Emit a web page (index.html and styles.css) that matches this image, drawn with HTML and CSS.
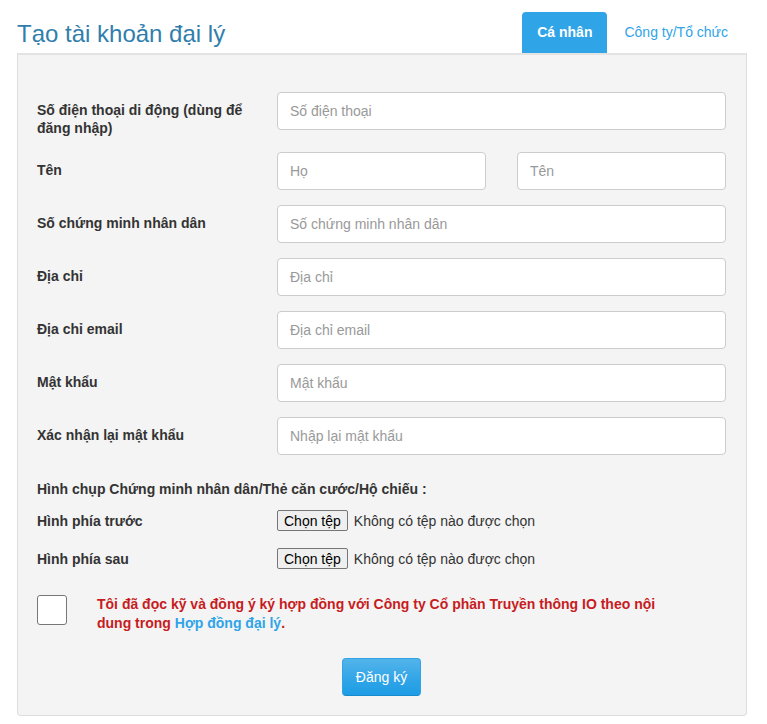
FILE: index.html
```html
<!DOCTYPE html>
<html lang="vi">
<head>
    <meta charset="UTF-8">
    <meta name="viewport" content="width=device-width, initial-scale=1.0">
    <title>Tạo tài khoản đại lý</title>
    <link rel="stylesheet" href="styles.css">
</head>
<body>

<div class="wrapper">
    <div class="header">
        <h1>Tạo tài khoản đại lý</h1>
        <ul class="tabs">
            <li class="tab active"><a href="#">Cá nhân</a></li>
            <li class="tab"><a href="#">Công ty/Tổ chức</a></li>
        </ul>
    </div>

    <div class="panel">
        <form action="#" method="post">

            <!-- Số điện thoại -->
            <div class="form-group">
                <label class="control-label" for="phone">Số điện thoại di động (dùng để đăng nhập)</label>
                <input type="text" id="phone" class="form-control" placeholder="Số điện thoại">
            </div>

            <!-- Họ tên -->
            <div class="form-group">
                <label class="control-label" for="ho">Tên</label>
                <div class="two-cols">
                    <input type="text" id="ho" class="form-control" placeholder="Họ">
                    <input type="text" id="ten" class="form-control" placeholder="Tên">
                </div>
            </div>

            <div class="form-group">
                <label class="control-label" for="cmnd">Số chứng minh nhân dân</label>
                <input type="text" id="cmnd" class="form-control" placeholder="Số chứng minh nhân dân">
            </div>

            <div class="form-group">
                <label class="control-label" for="diachi">Địa chỉ</label>
                <input type="text" id="diachi" class="form-control" placeholder="Địa chỉ">
            </div>

            <div class="form-group">
                <label class="control-label" for="email">Địa chỉ email</label>
                <input type="email" id="email" class="form-control" placeholder="Địa chỉ email">
            </div>

            <div class="form-group">
                <label class="control-label" for="matkhau">Mật khẩu</label>
                <input type="password" id="matkhau" class="form-control" placeholder="Mật khẩu">
            </div>

            <div class="form-group">
                <label class="control-label" for="matkhau2">Xác nhận lại mật khẩu</label>
                <input type="password" id="matkhau2" class="form-control" placeholder="Nhập lại mật khẩu">
            </div>

            <!-- Hình chụp giấy tờ -->
            <p class="section-title">Hình chụp Chứng minh nhân dân/Thẻ căn cước/Hộ chiếu :</p>

            <div class="file-row">
                <span class="file-label">Hình phía trước</span>
                <div class="file-input">
                    <button type="button" class="file-btn">Chọn tệp</button>
                    <span class="file-name">Không có tệp nào được chọn</span>
                </div>
            </div>

            <div class="file-row">
                <span class="file-label">Hình phía sau</span>
                <div class="file-input">
                    <button type="button" class="file-btn">Chọn tệp</button>
                    <span class="file-name">Không có tệp nào được chọn</span>
                </div>
            </div>

            <!-- Điều khoản -->
            <div class="agree">
                <input type="checkbox" id="dongy" class="agree-box">
                <label for="dongy" class="agree-text">Tôi đã đọc kỹ và đồng ý ký hợp đồng với Công ty Cổ phần Truyền thông IO theo nội dung trong <a href="#">Hợp đồng đại lý</a>.</label>
            </div>

            <div class="actions">
                <button type="submit" class="btn-primary">Đăng ký</button>
            </div>
        </form>
    </div>
</div>

</body>
</html>
```

FILE: styles.css
```css
body {
    margin: 0;
    font-family: "Liberation Sans", Arial, sans-serif;
    font-size: 14px;
    color: #333;
    background-color: #fff;
}
.wrapper {
    width: 730px;
    margin-left: 17px;
}
.header {
    display: flex;
    justify-content: space-between;
    align-items: flex-end;
    height: 53px;
}
h1 {
    margin: 0 0 6px 0;
    font-size: 24px;
    font-weight: normal;
    line-height: 1.1;
    color: #317eac;
}
.tabs {
    display: flex;
    list-style: none;
    margin: 0 4px 0 0;
    padding: 0;
}
.tab {
    margin-left: 2px;
}
.tab a {
    display: block;
    padding: 10px 15px 11px;
    line-height: 20px;
    color: #2fa4e7;
    text-decoration: none;
    border-radius: 4px 4px 0 0;
}
.tab.active a {
    background-color: #2fa4e7;
    color: #fff;
    font-weight: bold;
}
.panel {
    background-color: #f4f4f4;
    border: 1px solid #dddddd;
    border-top: 2px solid #e3e3e3;
    border-radius: 0 0 4px 4px;
    padding: 37px 20px 19px 19px;
}
.form-group {
    display: grid;
    grid-template-columns: 240px 1fr;
    margin-bottom: 15px;
}
.control-label {
    font-weight: bold;
    padding-top: 9px;
    line-height: 18px;
    padding-right: 20px;
}
.form-control {
    display: block;
    box-sizing: border-box;
    width: 100%;
    height: 38px;
    padding: 8px 12px;
    font-family: inherit;
    font-size: 14px;
    color: #555;
    background-color: #fff;
    border: 1px solid #ccc;
    border-radius: 4px;
}
.form-control::placeholder {
    color: #999;
}
.two-cols {
    display: grid;
    grid-template-columns: 1fr 1fr;
    gap: 31px;
}
.section-title {
    font-weight: bold;
    line-height: 20px;
    margin: 0 0 11px 0;
    padding-top: 9px;
}
.file-row {
    display: grid;
    grid-template-columns: 240px 1fr;
    align-items: center;
    margin-bottom: 17px;
}
.file-label {
    font-weight: bold;
    line-height: 20px;
}
.file-input {
    display: flex;
    align-items: center;
    gap: 6px;
}
.file-btn {
    height: 21px;
    padding: 0 6px;
    font-family: inherit;
    font-size: 14px;
    color: #000;
    background-color: #efefef;
    border: 1px solid #767676;
    border-radius: 2px;
}
.file-name {
    color: #333;
}
.agree {
    display: flex;
    align-items: flex-start;
    margin-top: 26px;
}
.agree-box {
    -webkit-appearance: none;
    appearance: none;
    width: 30px;
    height: 30px;
    margin: 0 30px 0 0;
    flex: none;
    background-color: #fff;
    border: 1px solid #777;
    border-radius: 3px;
}
.agree-text {
    max-width: 585px;
    font-weight: bold;
    line-height: 19px;
    color: #c71c22;
}
.agree-text a {
    color: #2fa4e7;
    text-decoration: none;
}
.actions {
    text-align: center;
    margin-top: 25px;
}
.btn-primary {
    height: 38px;
    padding: 0 13px;
    font-family: inherit;
    font-size: 14px;
    color: #fff;
    background-image: linear-gradient(#54b4eb, #2fa4e7 60%, #1d9ce5);
    border: 1px solid #2fa4e7;
    border-bottom-color: #178acc;
    border-radius: 4px;
    cursor: pointer;
}
```
